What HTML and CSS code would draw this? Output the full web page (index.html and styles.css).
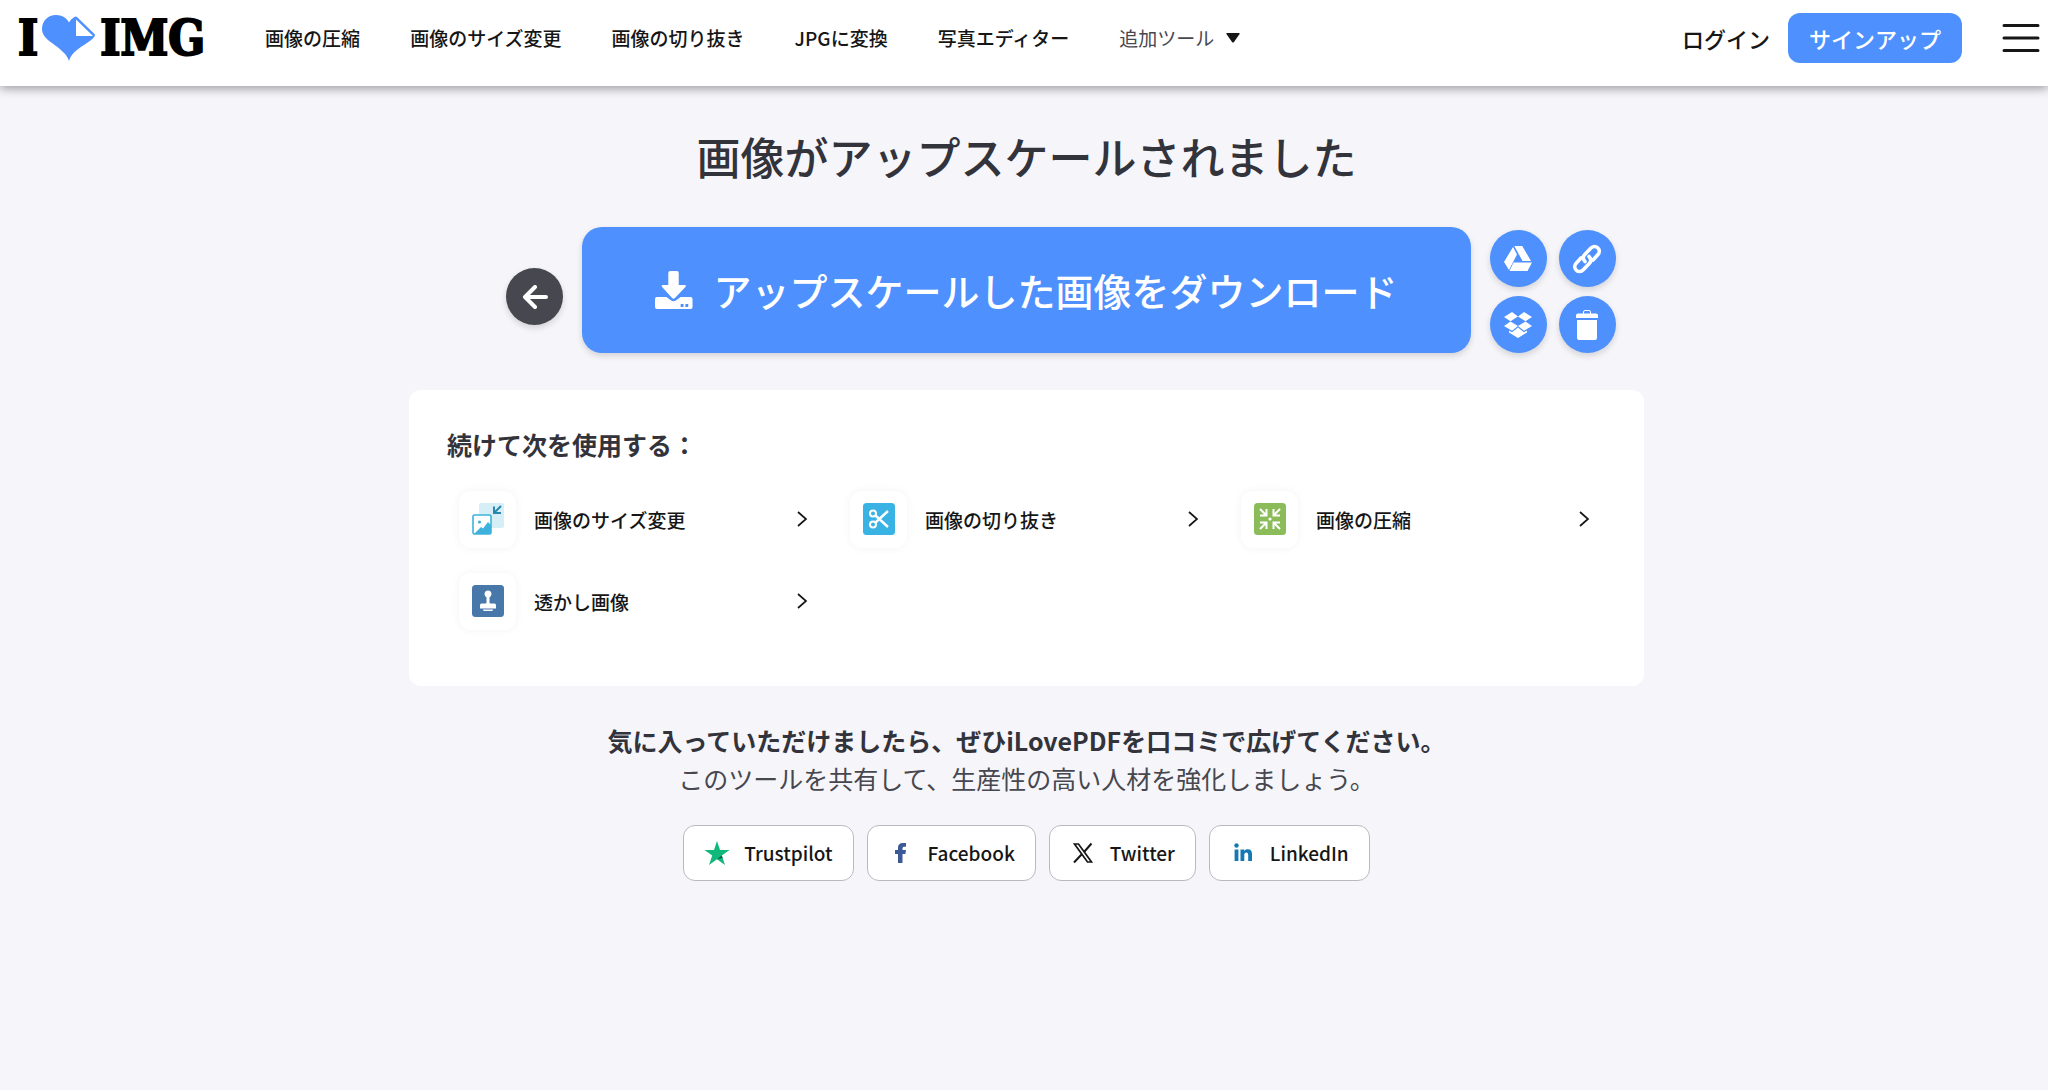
FILE: index.html
```html
<!DOCTYPE html>
<html lang="ja">
<head>
<meta charset="utf-8">
<meta name="viewport" content="width=device-width, initial-scale=1">
<title>画像がアップスケールされました</title>
<link rel="stylesheet" href="styles.css">
</head>
<body>
<header class="header">
  <a class="logo" href="#" aria-label="I love IMG">
    <span>I</span>
    <svg class="logo-heart" viewBox="0 0 54 46" aria-hidden="true">
      <path fill="#4d90fe" d="M27 46C25 39 18 34 10 28 3 23 0 19 0 14 0 6 6 0 14 0c6 0 11 3 13 7.500 1-2 3-4 5.500-5.500q1.500-1 3 .5L52.500 19q1 1.200 0 2.500C50 25 46 27 42 30c-8 5-13 9-15 16z"/>
      <path fill="#fff" d="M34 4.500V21h17z"/>
    </svg>
    <span>IMG</span>
  </a>
  <nav class="nav">
    <a href="#">画像の圧縮</a>
    <a href="#">画像のサイズ変更</a>
    <a href="#">画像の切り抜き</a>
    <a href="#">JPGに変換</a>
    <a href="#">写真エディター</a>
    <button class="nav-more" type="button">追加ツール
      <svg width="14" height="10" viewBox="0 0 14 10" aria-hidden="true"><path fill="#161616" d="M1 0h12q1 0 .6 1L8 9q-1 1-2 0L.4 1Q0 0 1 0z"/></svg>
    </button>
  </nav>
  <div class="account">
    <a class="login" href="#">ログイン</a>
    <a class="signup" href="#">サインアップ</a>
    <button class="menu" type="button" aria-label="メニュー">
      <svg width="38" height="30" viewBox="0 0 38 30" aria-hidden="true"><path stroke="#161616" stroke-width="3" stroke-linecap="round" d="M2 2.500h34M2 15h34M2 27.500h34"/></svg>
    </button>
  </div>
</header>

<main class="main">
  <h1 class="title">画像がアップスケールされました</h1>

  <div class="actions">
    <button class="round back" type="button" aria-label="戻る">
      <svg width="26" height="24" viewBox="0 0 26 24" fill="none" stroke="#fff" stroke-width="4" stroke-linecap="round" stroke-linejoin="round" aria-hidden="true"><path d="M24 12H3M13 2 3 12l10 10"/></svg>
    </button>
    <a class="download" href="#">
      <svg width="38" height="38" viewBox="0 0 40 38" preserveAspectRatio="none" fill="#fff" aria-hidden="true">
        <path d="M16 0h7q2 0 2 2v12h6q2.500 0 1 2L21 27q-1.500 1.500-3 0L7.500 16q-1.500-2 1-2H14V2q0-2 2-2z"/>
        <path fill-rule="evenodd" d="M2 26h10l5 3.500q2.500 1.500 5 0L27 26h10.500q2 0 2 2v8q0 2-2 2H2q-2 0-2-2v-8q0-2 2-2zm25 7v3h3v-3zm5 0v3h3v-3z"/>
      </svg>
      アップスケールした画像をダウンロード
    </a>
    <div class="tools">
      <button class="round" type="button" aria-label="Google ドライブに保存">
        <svg width="28" height="25" viewBox="0 0 28 25" fill="#fff" aria-hidden="true"><path d="M9 1 13 8.500 5 24 0 16zM10.300 0h8L27 15h-8.500zM9.500 16.500H28L23.500 25H5.500z"/></svg>
      </button>
      <button class="round" type="button" aria-label="リンクをコピー">
        <svg width="30" height="30" viewBox="0 0 30 30" fill="none" stroke="#fff" stroke-width="3.600" stroke-linecap="round" aria-hidden="true"><path d="M13 17.500c-2.300-2.300-2.300-5 0-7.300l5.700-6c2.200-2.200 5-2.300 7-.4 2.100 2 2.100 4.800.1 7L21 16"/><path d="M17 12.500c2.300 2.300 2.300 5 0 7.300l-5.700 6c-2.200 2.200-5 2.300-7 .4-2.100-2-2.100-4.800-.1-7L9 14"/></svg>
      </button>
      <button class="round" type="button" aria-label="Dropbox に保存">
        <svg width="28" height="26" viewBox="0 0 28 26" fill="#fff" aria-hidden="true"><path d="M8 0l6 4.500-7.500 4.700L0 5zM20 0l8 5-6.500 4.200L14 4.500zM0 14l6.500-4.500L14 14l-6 4.800zM28 14l-6.500-4.500L14 14l6 4.800zM14 15.500l6 4.800 3-1.800v2L14 26l-9-5.500v-2l3 1.800z"/></svg>
      </button>
      <button class="round" type="button" aria-label="削除">
        <svg width="22" height="30" viewBox="0 0 22 30" aria-hidden="true"><path fill="none" stroke="#fff" d="M7.500 4V2q0-1.500 1.500-1.500h4Q14.500.500 14.500 2v2"/><path fill="#fff" d="M2 3.500h18q2 0 2 2V8H0V5.500q0-2 2-2zM1 10h20v18q0 2-2 2H3q-2 0-2-2z"/></svg>
      </button>
    </div>
  </div>

  <section class="card">
    <h2 class="card-title">続けて次を使用する：</h2>
    <ul class="links">
      <li><a class="link" href="#">
        <span class="tile"><svg width="32" height="32" viewBox="0 0 32 32" aria-hidden="true">
          <rect x="7" width="25" height="25" rx="2" fill="#d6eef6"/>
          <path fill="none" stroke="#2b87ad" stroke-width="2" d="M29 3l-6.500 6.500M22 3.500V10h7"/>
          <rect x="1" y="12" width="18" height="19" rx="1.500" fill="#fff" stroke="#3eb2dc" stroke-width="1.600"/>
          <circle cx="7.500" cy="19" r="1.600" fill="#3eb2dc"/>
          <path fill="#3eb2dc" d="M2 31 9 24l2 1.500 5-6.500 3 3v9z"/>
        </svg></span>
        <span class="link-text">画像のサイズ変更</span>
        <svg class="chevron" viewBox="0 0 10 16" aria-hidden="true"><path d="M1 1l8 7-8 7"/></svg>
      </a></li>
      <li><a class="link" href="#">
        <span class="tile"><svg width="32" height="32" viewBox="0 0 32 32" aria-hidden="true">
          <rect width="32" height="32" rx="3.500" fill="#39b3e4"/>
          <g fill="none" stroke="#fff" stroke-width="2"><circle cx="10" cy="10.500" r="3"/><circle cx="10" cy="21.500" r="3"/><path stroke-width="2.400" d="M12.500 19.500 25 8M12.500 12.500 25 24"/></g>
        </svg></span>
        <span class="link-text">画像の切り抜き</span>
        <svg class="chevron" viewBox="0 0 10 16" aria-hidden="true"><path d="M1 1l8 7-8 7"/></svg>
      </a></li>
      <li><a class="link" href="#">
        <span class="tile"><svg width="32" height="32" viewBox="0 0 32 32" aria-hidden="true">
          <rect width="32" height="32" rx="3.500" fill="#8cbc5a"/>
          <path fill="none" stroke="#fff" stroke-width="2" d="M6 6l6 6M12.500 6v6.500H6M26 6l-6 6M19.500 6v6.500H26M6 26l6-6M12.500 26v-6.500H6M26 26l-6-6M19.500 26v-6.500H26"/>
          <circle cx="16" cy="16" r="1.600" fill="#fff"/>
        </svg></span>
        <span class="link-text">画像の圧縮</span>
        <svg class="chevron" viewBox="0 0 10 16" aria-hidden="true"><path d="M1 1l8 7-8 7"/></svg>
      </a></li>
      <li><a class="link" href="#">
        <span class="tile"><svg width="32" height="32" viewBox="0 0 32 32" aria-hidden="true">
          <rect width="32" height="32" rx="3.500" fill="#4877aa"/>
          <path fill="#fff" d="M14.500 17.500v-5.300a3.500 3.500 0 1 1 3 0v5.300q0 1 1 1h4q1.500 0 1.500 1.500v3.500H8V20q0-1.500 1.500-1.500h4q1 0 1-1zM11 24.500h10q0 1.500-1.500 1.500h-7q-1.500 0-1.500-1.500z"/>
        </svg></span>
        <span class="link-text">透かし画像</span>
        <svg class="chevron" viewBox="0 0 10 16" aria-hidden="true"><path d="M1 1l8 7-8 7"/></svg>
      </a></li>
    </ul>
  </section>

  <section class="share">
    <h2 class="share-title">気に入っていただけましたら、ぜひiLovePDFを口コミで広げてください。</h2>
    <p class="share-text">このツールを共有して、生産性の高い人材を強化しましょう。</p>
    <div class="share-buttons">
      <a class="share-button" href="#">
        <svg width="26" height="26" viewBox="0 0 26 26" aria-hidden="true"><path fill="#0fb87b" d="M13 1l3 9h9.500l-7.700 5.600L21 25l-8-5.700L5 25l3.200-9.400L.500 10H10z"/><path fill="#0a5b45" d="M17.800 15.600l.8 2.400L13 19.300z"/></svg>
        Trustpilot</a>
      <a class="share-button" href="#">
        <svg width="26" height="26" viewBox="0 0 26 26" aria-hidden="true"><path fill="#3d5a98" d="M10 23V14H7v-4h3V7.500C10 4.500 12 3 14.500 3H18v3.800h-2q-1.500 0-1.500 1.500V10H18l-.6 4h-2.900v9z"/></svg>
        Facebook</a>
      <a class="share-button" href="#">
        <svg width="26" height="26" viewBox="0 0 26 26" fill="none" stroke="#161616" aria-hidden="true"><path stroke-width="1.700" d="M4.500 4H8.500L21.500 22h-4z"/><path stroke-width="2" d="M21.500 3.500 14.500 11.500M11.500 14.500 4 22.500"/></svg>
        Twitter</a>
      <a class="share-button" href="#">
        <svg width="26" height="26" viewBox="0 0 26 26" fill="#1578b4" aria-hidden="true"><circle cx="6.500" cy="5.500" r="2.200"/><path d="M4.600 9.500h3.800V21H4.600zM10.500 9.500h3.700V11c.8-1.200 2-1.800 3.600-1.800 3 0 4.200 1.800 4.200 5V21h-3.800v-6c0-1.600-.6-2.500-1.900-2.500-1.400 0-2 1-2 2.500v6h-3.800z"/></svg>
        LinkedIn</a>
    </div>
  </section>
</main>
</body>
</html>
```
FILE: styles.css
```css
* {
  box-sizing: border-box;
}

body {
  margin: 0;
  min-height: 100vh;
  padding-bottom: 2px;
  display: flex;
  flex-direction: column;
  background: #fff;
  color: #161616;
  font-family: "Noto Sans CJK JP", sans-serif;
  font-size: 19px;
  font-weight: 500;
}

a {
  color: inherit;
  text-decoration: none;
}

button {
  border: 0;
  padding: 0;
  background: none;
  font: inherit;
  cursor: pointer;
}

svg {
  flex: none;
}

.header {
  position: relative;
  display: flex;
  align-items: center;
  min-height: 86px;
  padding: 0 8px 10px 18px;
  background: #fff;
  box-shadow: 0 2px 10px rgba(0, 0, 0, 0.4);
}

.logo {
  display: flex;
  align-items: center;
  gap: 4px;
  color: #000;
  font-family: "DejaVu Serif Condensed", "DejaVu Serif", serif;
  font-size: 48px;
  font-weight: 700;
  line-height: 60px;
  -webkit-text-stroke: 2px #000;
}

.logo-heart {
  width: 54px;
  height: 46px;
}

.nav {
  display: flex;
  align-items: center;
  gap: 50px;
  margin-left: 60px;
  line-height: 28px;
  white-space: nowrap;
}

.nav-more {
  display: flex;
  align-items: center;
  gap: 12px;
  color: #47474f;
  font-weight: 400;
}

.account {
  display: flex;
  align-items: center;
  margin-left: auto;
  font-size: 22px;
  line-height: 32px;
  white-space: nowrap;
}

.signup {
  margin: 0 40px 0 18px;
  padding: 9px 21px;
  border-radius: 12px;
  background: #4d90fe;
  color: #fff;
}

.menu svg {
  display: block;
}

.main {
  flex: 1;
  padding: 38px 0 48px 5px;
  background: #f5f5fa;
}

.title {
  margin: 0;
  color: #33333b;
  font-size: 44px;
  font-weight: 500;
  line-height: 64px;
  text-align: center;
}

.actions {
  display: grid;
  grid-template-columns: 1fr auto 1fr;
  align-items: end;
  gap: 19px;
  margin-top: 39px;
}

.round {
  display: flex;
  align-items: center;
  justify-content: center;
  width: 57px;
  height: 57px;
  border-radius: 50%;
  background: #4d90fe;
  box-shadow: 0 3px 6px rgba(0, 0, 0, 0.14);
}

.back {
  justify-self: end;
  margin-bottom: 28px;
  background: #47474f;
}

.download {
  display: flex;
  align-items: center;
  gap: 20px;
  min-height: 126px;
  padding: 0 73px;
  border-radius: 20px;
  background: #4d90fe;
  box-shadow: 0 3px 6px rgba(0, 0, 0, 0.14);
  color: #fff;
  font-size: 38px;
  line-height: 56px;
}

.tools {
  display: grid;
  grid-template-columns: auto auto;
  justify-content: start;
  gap: 9px 12px;
}

.card {
  max-width: 1235px;
  margin: 37px auto 0;
  padding: 35px 24px 44px 38px;
  border-radius: 12px;
  background: #fff;
}

.card-title {
  margin: 0;
  color: #33333b;
  font-size: 25px;
  font-weight: 700;
  line-height: 38px;
}

.links {
  display: grid;
  grid-template-columns: repeat(3, 1fr);
  margin: 15px 0 0;
  padding: 0;
  list-style: none;
}

.link {
  display: flex;
  align-items: center;
  min-height: 82px;
  padding: 0 31px 0 12px;
}

.tile {
  display: flex;
  align-items: center;
  justify-content: center;
  width: 57px;
  height: 57px;
  margin-right: 18px;
  border-radius: 12px;
  background: #fff;
  box-shadow: 0 0 10px rgba(0, 0, 0, 0.05);
}

.link-text {
  flex: 1;
}

.chevron {
  width: 10px;
  height: 16px;
  fill: none;
  stroke: #161616;
  stroke-width: 1.7;
  overflow: visible;
}

.share {
  margin-top: 35px;
  text-align: center;
  font-size: 25px;
  line-height: 38px;
}

.share-title {
  margin: 0;
  color: #33333b;
  font-size: 25px;
  font-weight: 700;
}

.share-text {
  margin: 0;
  color: #47474f;
  font-weight: 400;
}

.share-buttons {
  display: flex;
  flex-wrap: wrap;
  justify-content: center;
  gap: 13px;
  margin-top: 28px;
  font-size: 19px;
}

.share-button {
  display: flex;
  align-items: center;
  gap: 14px;
  min-height: 56px;
  padding: 0 20px;
  border: 1px solid #b9b9c2;
  border-radius: 12px;
  background: #fff;
}
```
